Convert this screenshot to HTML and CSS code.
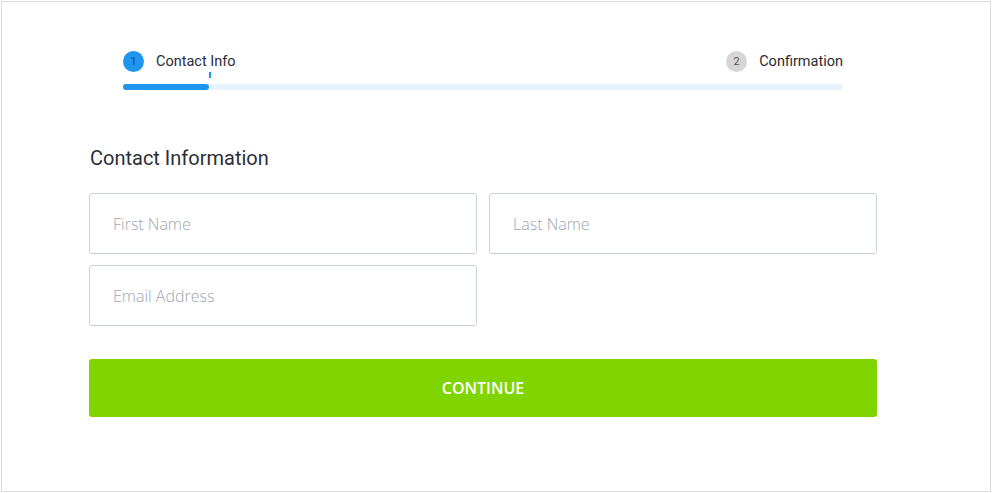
FILE: index.html
```html
<!DOCTYPE html>
<html lang="en">
<head>
  <meta charset="UTF-8">
  <meta name="viewport" content="width=device-width, initial-scale=1.0">
  <title>Checkout - Contact Info</title>
  <link rel="stylesheet" href="styles.css">
</head>
<body>
  <div class="frame">
    <div class="checkout">
      <div class="stepper">
        <div class="steps">
          <div class="step active">
            <span class="step-num">1</span>
            <span class="step-label">Contact Info</span>
          </div>
          <div class="step">
            <span class="step-num">2</span>
            <span class="step-label">Confirmation</span>
          </div>
        </div>
        <div class="progress">
          <div class="progress-fill"></div>
          <span class="progress-tick"></span>
        </div>
      </div>

      <h2 class="form-title">Contact Information</h2>

      <div class="form-grid">
        <input type="text" placeholder="First Name">
        <input type="text" placeholder="Last Name">
        <input type="email" placeholder="Email Address">
      </div>

      <button class="continue-button">CONTINUE</button>
    </div>
  </div>
</body>
</html>
```

FILE: styles.css
```css
body {
  margin: 0;
  padding: 0;
  font-family: Roboto, Arial, sans-serif;
  background-color: #fff;
}

.frame {
  box-sizing: border-box;
  width: 990px;
  height: 491px;
  margin: 1px 0 0 1px;
  border: 1px solid #dcdcdc;
  padding: 49px 0 0 87px;
}

.checkout {
  width: 788px;
}

.stepper {
  margin: 0 34px;
}

.steps {
  display: flex;
  justify-content: space-between;
  align-items: center;
}

.step {
  display: flex;
  align-items: center;
  gap: 12px;
}

.step-num {
  width: 21px;
  height: 21px;
  border-radius: 50%;
  background-color: #d6d6d6;
  color: #555;
  font-size: 11px;
  display: flex;
  align-items: center;
  justify-content: center;
}

.step.active .step-num {
  background-color: #1e96f0;
  color: #1b4a72;
}

.step-label {
  font-size: 14.5px;
  color: #2b2b36;
}

.progress {
  position: relative;
  height: 6px;
  margin-top: 12px;
  background-color: #e6f2fc;
  border-radius: 3px;
}

.progress-fill {
  width: 86px;
  height: 100%;
  background-color: #1e96f0;
  border-radius: 3px;
}

.progress-tick {
  position: absolute;
  left: 86px;
  top: -12px;
  width: 2px;
  height: 6px;
  background-color: #1e96f0;
}

.form-title {
  margin: 56px 0 23px 1px;
  font-size: 20px;
  font-weight: 400;
  color: #2b2f38;
}

.form-grid {
  display: grid;
  grid-template-columns: 1fr 1fr;
  gap: 11px 12px;
}

.form-grid input {
  box-sizing: border-box;
  height: 61px;
  padding: 0 23px;
  border: 1px solid #c9d3de;
  border-radius: 3px;
  font-family: "Open Sans", Arial, sans-serif;
  font-weight: 300;
  font-size: 16px;
  color: #333;
}

.form-grid input::placeholder {
  color: #9aa7b4;
}

.continue-button {
  display: block;
  width: 100%;
  height: 58px;
  margin-top: 33px;
  border: none;
  border-radius: 3px;
  background-color: #80d400;
  color: #fff;
  font-family: "Open Sans", Arial, sans-serif;
  font-weight: 600;
  font-size: 16px;
  cursor: pointer;
}
```
